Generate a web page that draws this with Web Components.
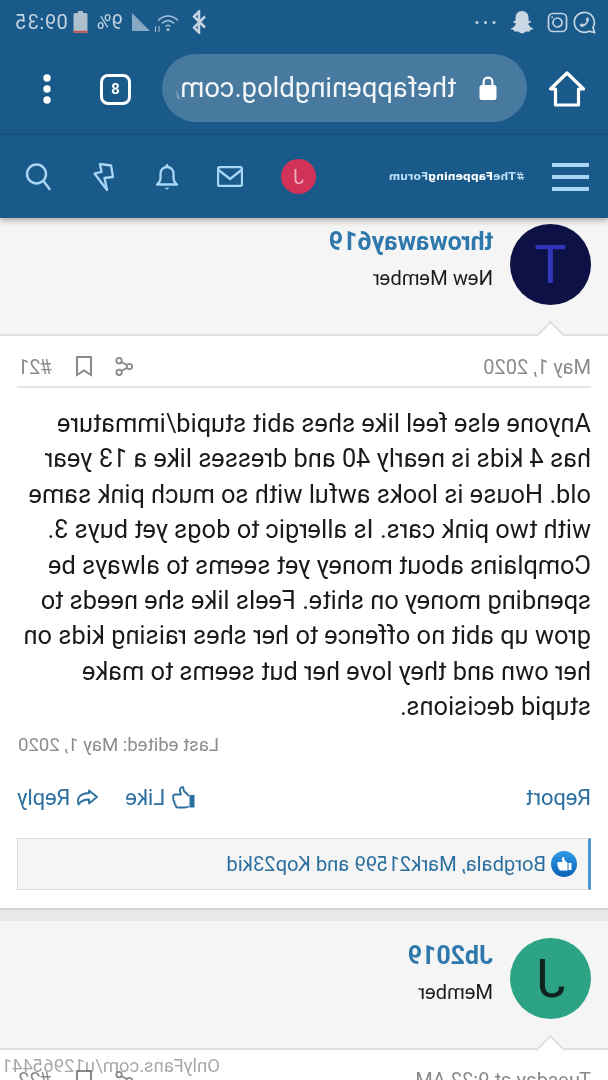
<!DOCTYPE html>
<html>
<head>
<meta charset="utf-8">
<style>
  html, body { margin: 0; padding: 0; background: #fff; }
  body { width: 608px; height: 1080px; overflow: hidden; font-family: Roboto, sans-serif; }
  #mirror { display: block; width: 608px; height: 1080px; overflow: hidden; position: relative; transform: scaleX(-1); }
</style>
</head>
<body>
<div id="mirror">
  <status-bar></status-bar>
  <browser-bar url="thefappeningblog.com/" tabs="8"></browser-bar>
  <forum-nav></forum-nav>
  <forum-post initial="T" avatar="#0e1145" ink="#2f36b8" name="throwaway619" role="New Member" date="May 1, 2020" num="#21" top="6" head="118">
    <p>Anyone else feel like shes abit stupid/immature has 4 kids is nearly 40 and dresses like a 13 year old. House is looks awful with so much pink same with two pink cars. Is allergic to dogs yet buys 3. Complains about money yet seems to always be spending money on shite. Feels like she needs to grow up abit no offence to her shes raising kids on her own and they love her but seems to make stupid decisions.</p>
    <edit-note>Last edited: May 1, 2020</edit-note>
    <post-actions></post-actions>
    <reaction-bar>Borgbala, Mark21599 and Kop23kid</reaction-bar>
  </forum-post>
  <post-gap></post-gap>
  <forum-post initial="J" avatar="#2ba384" ink="#10241f" name="Jb2019" role="Member" date="Tuesday at 9:22 AM" num="#22" top="17" head="129"></forum-post>
  <water-mark>OnlyFans.com/u12965441</water-mark>
</div>

<script>
function shadow(el, html) {
  el.attachShadow({ mode: "open" }).innerHTML = html;
}

class StatusBar extends HTMLElement {
  connectedCallback() {
    shadow(this, `
      <style>
        :host { display: flex; align-items: center; height: 44px; background: #195a8b; color: #c3d3e0; padding: 0 15px 0 11px; box-sizing: border-box; font: 400 20px Roboto, sans-serif; }
        svg { display: block; flex: none; }
        .left { display: flex; align-items: center; }
        .right { margin-left: auto; display: flex; align-items: center; }
      </style>
      <div class="left">
        <svg width="25" height="25" viewBox="0 0 25 25" fill="none" stroke="#c3d3e0" stroke-width="1.7"><path d="M2.500 22.500l1.500-5.200A10 10 0 1 1 8 21.200z"/><path d="M9 7.500c-1.500 1-1.200 3.500.8 6s4.700 4 6.500 3.300l1.200-2-2.800-1.500-1.200 1c-1.500-.6-2.700-2-3.200-3.300l1-1.200-1.200-2.500z" fill="#c3d3e0" stroke="none"/></svg>
        <svg style="margin-left:4px" width="21" height="21" viewBox="0 0 21 21" fill="none" stroke="#c3d3e0" stroke-width="1.7"><rect x="1.500" y="1.500" width="18" height="18" rx="4.500"/><circle cx="10.500" cy="10.500" r="4.500"/><circle cx="15.800" cy="5.200" r="1" fill="#c3d3e0" stroke="none"/></svg>
        <svg style="margin-left:12px" width="26" height="26" viewBox="0 0 26 26" fill="#c9d8e4"><path d="M13 2c4 0 6.500 3 6.500 6.500 0 1.500 0 2.500.2 3.300.7.500 2.300.2 2.300 1 0 1-2.600 1.300-2.800 2 0 1 2.300 4.200 5.300 4.700 0 1.100-2.700 1.200-3.300 1.600-.4.500-.2 1.700-.8 1.700-1 0-2-.5-3.700 0-1.300.5-2.300 1.700-3.700 1.700s-2.400-1.200-3.700-1.700c-1.700-.5-2.700 0-3.700 0-.6 0-.4-1.200-.8-1.700-.6-.4-3.300-.5-3.300-1.600 3-.5 5.300-3.700 5.300-4.700-.2-.7-2.800-1-2.800-2 0-.8 1.600-.5 2.300-1 .2-.8.2-1.800.2-3.300C6.500 5 9 2 13 2z"/></svg>
        <svg style="margin-left:13px" width="21" height="5" viewBox="0 0 21 5" fill="#c3d3e0"><circle cx="2" cy="2.500" r="1.500"/><circle cx="10.500" cy="2.500" r="1.500"/><circle cx="19" cy="2.500" r="1.500"/></svg>
      </div>
      <div class="right">
        <svg width="16" height="24" viewBox="0 0 16 24" fill="none" stroke="#c3d3e0" stroke-width="2.500"><path d="M2 6.500l11 11L8 22.500V1.500l5 5L2 17.500"/></svg>
        <svg style="margin-left:10px" width="28" height="24" viewBox="0 0 28 24" fill="none" stroke="#a9c0d3" stroke-width="1.600"><path d="M3 10.500c6-6 14-6 20 0M7 13.500c4-4 8-4 12 0M10.500 16.500c1.500-1.500 3.500-1.500 5 0"/><circle cx="13" cy="19.500" r="1.500" fill="#a9c0d3" stroke="none"/><path d="M22 16v6M25.500 22v-6" stroke-width="1"/></svg>
        <svg style="margin-left:2px" width="20" height="24" viewBox="0 0 20 24" fill="#87a8c2"><path d="M1 21h18V3z"/></svg>
        <span style="margin-left:8px;width:28px;font-size:20px;white-space:nowrap">9%</span>
        <svg style="margin-left:7px" width="15" height="24" viewBox="0 0 15 24"><path d="M5 1h5v2h3a1.500 1.500 0 0 1 1.500 1.500V22a1 1 0 0 1-1 1h-12a1 1 0 0 1-1-1V4.500A1.500 1.500 0 0 1 2 3h3z" fill="#aebfce"/><rect x=".5" y="20.800" width="14" height="2" fill="#c25050"/></svg>
        <span style="margin-left:5px;letter-spacing:.6px">09:35</span>
      </div>`);
  }
}

class BrowserBar extends HTMLElement {
  connectedCallback() {
    const url = this.getAttribute("url");
    const tabs = this.getAttribute("tabs");
    shadow(this, `
      <style>
        :host { display: flex; align-items: center; height: 91px; background: #195a8b; box-sizing: border-box; border-bottom: 1px solid #17547f; padding: 0 31px 0 22px; color: #fff; font-family: Roboto, sans-serif; }
        svg { display: block; flex: none; }
        .pill { margin-left: 21px; width: 365px; height: 68px; margin-top: -3px; border-radius: 34px; background: #48799f; display: flex; align-items: center; padding-left: 29px; box-sizing: border-box; overflow: hidden; }
        .url { margin-left: 22px; font-size: 27.500px; white-space: nowrap; width: 281px; overflow: hidden; flex: none; color: #f2f6f9; -webkit-mask-image: linear-gradient(90deg, #000 97%, transparent); mask-image: linear-gradient(90deg, #000 97%, transparent); }
        .tabs { margin-left: 31px; width: 31px; height: 31px; border: 3px solid #fff; border-radius: 8px; box-sizing: border-box; display: grid; place-items: center; font: 700 15px Roboto, sans-serif; }
      </style>
      <svg width="38" height="38" viewBox="0 0 38 38" fill="none" stroke="#fff" stroke-width="3.200" stroke-linejoin="round"><path d="M2.500 19L19 3l16.500 16h-5v16h-23V19z"/></svg>
      <div class="pill">
        <svg width="20" height="26" viewBox="0 0 20 26" fill="#fff"><path d="M4.500 11V7a5.500 5.500 0 0 1 11 0v4h-2.200V7a3.300 3.300 0 0 0-6.600 0v4z"/><rect x="1.500" y="10" width="17" height="15" rx="2.500"/></svg>
        <span class="url">${url}</span>
      </div>
      <div class="tabs">${tabs}</div>
      <svg style="margin-left:48px" width="10" height="32" viewBox="0 0 10 32" fill="#fff"><circle cx="5" cy="5" r="3.700"/><circle cx="5" cy="16" r="3.700"/><circle cx="5" cy="27" r="3.700"/></svg>`);
  }
}

class ForumNav extends HTMLElement {
  connectedCallback() {
    shadow(this, `
      <style>
        :host { display: flex; align-items: center; height: 83px; background: #195a8b; box-sizing: border-box; padding: 0 17px 0 19px; position: relative; z-index: 2; box-shadow: 0 2px 7px rgba(0,0,0,.35); font-family: Roboto, sans-serif; }
        svg { display: block; flex: none; }
        .burger { display: grid; gap: 8px; width: 37px; }
        .burger i { display: block; height: 4px; background: #a9d6f5; }
        .logo { margin-left: 27px; width: 135px; font: 700 11px "DejaVu Sans", sans-serif; color: #b9dcf5; white-space: nowrap; }
        .logo b { color: #fff; }
        .avatar { margin-left: 74px; width: 35px; height: 35px; border-radius: 50%; background: #d13358; color: #f2a9bd; display: grid; place-items: center; font-size: 20px; }
        .icons { display: flex; align-items: center; gap: 38px; margin-left: 38px; }
      </style>
      <div class="burger"><i></i><i></i><i></i></div>
      <span class="logo">#The<b>Fappening</b>Forum</span>
      <span class="avatar">J</span>
      <div class="icons">
        <svg width="26" height="21" viewBox="0 0 26 21" fill="none" stroke="#a9d6f5" stroke-width="2.300"><rect x="1" y="1" width="24" height="19" rx="2"/><path d="M1.500 4L13 13 24.500 4"/></svg>
        <svg width="24" height="27" viewBox="0 0 24 27" fill="none" stroke="#a9d6f5" stroke-width="2.300" stroke-linejoin="round"><path d="M2 21.500h20c-2-2-3.500-3-3.500-6V11A6.500 6.500 0 0 0 12 4a6.500 6.500 0 0 0-6.500 7v4.500c0 3-1.500 4-3.500 6z"/><circle cx="12" cy="2.200" r="1.300" fill="#a9d6f5" stroke="none"/><path d="M9.500 24.800h5l-2.500 2z" fill="#a9d6f5" stroke="none"/></svg>
        <svg style="margin-left:2px" width="22" height="28" viewBox="0 0 22 28" fill="none" stroke="#a9d6f5" stroke-width="2.300" stroke-linejoin="round"><path d="M4 2.500l11-1.500-1.500 8 7 1.500L8 27l2.500-12-8.500-1z"/></svg>
        <svg style="margin-left:4px" width="26" height="28" viewBox="0 0 26 28" fill="none" stroke="#a9d6f5" stroke-width="2.400" stroke-linecap="round"><circle cx="14.500" cy="11" r="9.500"/><path d="M7.500 18L1.500 26"/></svg>
      </div>`);
  }
}

class ForumPost extends HTMLElement {
  connectedCallback() {
    const a = (n) => this.getAttribute(n);
    shadow(this, `
      <style>
        :host { display: block; font-family: Roboto, sans-serif; }
        .head { height: ${a("head")}px; box-sizing: border-box; padding: ${a("top")}px 17px 0; background: #f5f5f5; border-bottom: 2px solid #dedede; display: flex; gap: 17px; position: relative; }
        .avatar { width: 81px; height: 81px; border-radius: 50%; background: ${a("avatar")}; color: ${a("ink")}; display: grid; place-items: center; font-size: 54px; flex: none; }
        .who { padding-top: 5px; }
        .name { font-weight: 700; font-size: 25px; line-height: 26px; color: #2f78ab; }
        .role { font-size: 20.200px; line-height: 20px; margin-top: 13px; color: #1c1c1c; }
        .tip { position: absolute; left: 47px; bottom: -12px; width: 21px; height: 21px; background: #fff; border: 2px solid #dedede; border-right: 0; border-bottom: 0; transform: rotate(45deg); box-sizing: border-box; }
        .body { background: #fff; padding: 0 17px; }
        .meta { height: 52px; box-sizing: border-box; padding-top: 11px; border-bottom: 2px solid #e6e6e6; display: flex; align-items: center; color: #8a8a8a; font-size: 20px; }
        .meta .right { margin-left: auto; display: flex; align-items: center; gap: 23px; padding-right: 1px; }
        svg { display: block; }
        ::slotted(p) { margin: 18px 0 0; font-size: 25.400px; line-height: 35.400px; color: #1a1a1a; }
      </style>
      <div class="head">
        <span class="avatar">${a("initial")}</span>
        <div class="who">
          <div class="name">${a("name")}</div>
          <div class="role">${a("role")}</div>
        </div>
        <span class="tip"></span>
      </div>
      <div class="body">
        <div class="meta">
          <span class="date">${a("date")}</span>
          <div class="right">
            <svg width="18" height="21" viewBox="0 0 20 21" fill="none" stroke="#8a8a8a" stroke-width="2"><circle cx="15.500" cy="4" r="3"/><circle cx="4" cy="10.500" r="3"/><circle cx="15.500" cy="17" r="3"/><path d="M6.500 9l6.500-3.500M6.500 12l6.500 3.500"/></svg>
            <svg width="16" height="21" viewBox="0 0 16 21" fill="none" stroke="#8a8a8a" stroke-width="2"><path d="M1 1h14v18l-7-4.500L1 19z"/></svg>
            <span class="num">${a("num")}</span>
          </div>
        </div>
        <slot></slot>
      </div>`);
  }
}

class EditNote extends HTMLElement {
  connectedCallback() {
    shadow(this, `
      <style>
        :host { display: block; margin-top: 9px; text-align: right; font: 400 18.600px/22px Roboto, sans-serif; color: #8c8c8c; padding-right: 1px; }
      </style>
      <slot></slot>`);
  }
}

class PostActions extends HTMLElement {
  connectedCallback() {
    shadow(this, `
      <style>
        :host { display: flex; align-items: center; height: 30px; margin-top: 27px; font: 400 22px Roboto, sans-serif; color: #2a6f9f; }
        svg { display: block; flex: none; }
        .right { margin-left: auto; display: flex; align-items: center; }
      </style>
      <span>Report</span>
      <div class="right">
        <svg width="23" height="23" viewBox="0 0 23 23" fill="none" stroke="#2a6f9f" stroke-width="1.800" stroke-linejoin="round"><rect x=".5" y="9" width="5" height="12.500" fill="#2a6f9f" stroke="none"/><path d="M6 10l5-5 1-4c2.500 0 3.500 2 3 4.500L14 8.500h6c2 0 2.500 2 1.500 3.500.5 1.500 0 3-1 3.500.3 1.500-.2 3-1.200 3.500.2 1.500-.8 2.500-2.300 2.500H9.500L6 20.500"/></svg>
        <span style="margin-left:7px">Like</span>
        <svg style="margin-left:25px" width="24" height="20" viewBox="0 0 24 20" fill="none" stroke="#2a6f9f" stroke-width="1.800" stroke-linejoin="round"><path d="M9.500 1.500L1.500 8l8 6.500v-4c5 0 8 1 10.500 5 1.500-5 1-10.500-10.500-11.500z" transform="translate(1.500 1)"/></svg>
        <span style="margin-left:6px">Reply</span>
      </div>`);
  }
}

class ReactionBar extends HTMLElement {
  connectedCallback() {
    shadow(this, `
      <style>
        :host { display: flex; align-items: center; height: 52px; margin-top: 25px; box-sizing: border-box; background: #f5f5f5; border: 1px solid #dcdcdc; border-left: 3px solid #4a98cc; padding-left: 11px; font: 400 20.200px Roboto, sans-serif; color: #2a6f9f; }
        svg { display: block; flex: none; margin-right: 5px; }
      </style>
      <svg width="26" height="26" viewBox="0 0 26 26"><defs><linearGradient id="g" x1="0" y1="0" x2="0" y2="1"><stop offset="0" stop-color="#2f9ae6"/><stop offset="1" stop-color="#0b62b5"/></linearGradient></defs><circle cx="13" cy="13" r="13" fill="url(#g)"/><path d="M5.500 12h3v7h-3zM9.500 12l3-3 .5-3c2 0 2.500 1.500 2 3l-.5 2h4c1.500 0 1.500 2 .8 2.500.6 1 .2 2-.6 2.500.2 1-.2 2-1 2.200 0 1-.7 1.300-1.500 1.300H9.500z" fill="#fff"/></svg>
      <span><slot></slot></span>`);
  }
}

class PostGap extends HTMLElement {
  connectedCallback() {
    shadow(this, `
      <style>
        :host { display: block; padding-top: 18px; background: #fff; }
        div { height: 13px; box-sizing: border-box; background: #e8e8e8; border-top: 2px solid #d4d4d4; }
      </style>
      <div></div>`);
  }
}

class WaterMark extends HTMLElement {
  connectedCallback() {
    shadow(this, `
      <style>
        :host { position: absolute; left: 388px; top: 1055px; font: 400 18.500px/22px Roboto, sans-serif; color: rgba(110,110,110,.6); white-space: nowrap; }
      </style>
      <slot></slot>`);
  }
}

customElements.define("status-bar", StatusBar);
customElements.define("browser-bar", BrowserBar);
customElements.define("forum-nav", ForumNav);
customElements.define("forum-post", ForumPost);
customElements.define("edit-note", EditNote);
customElements.define("post-actions", PostActions);
customElements.define("reaction-bar", ReactionBar);
customElements.define("post-gap", PostGap);
customElements.define("water-mark", WaterMark);
</script>
</body>
</html>
